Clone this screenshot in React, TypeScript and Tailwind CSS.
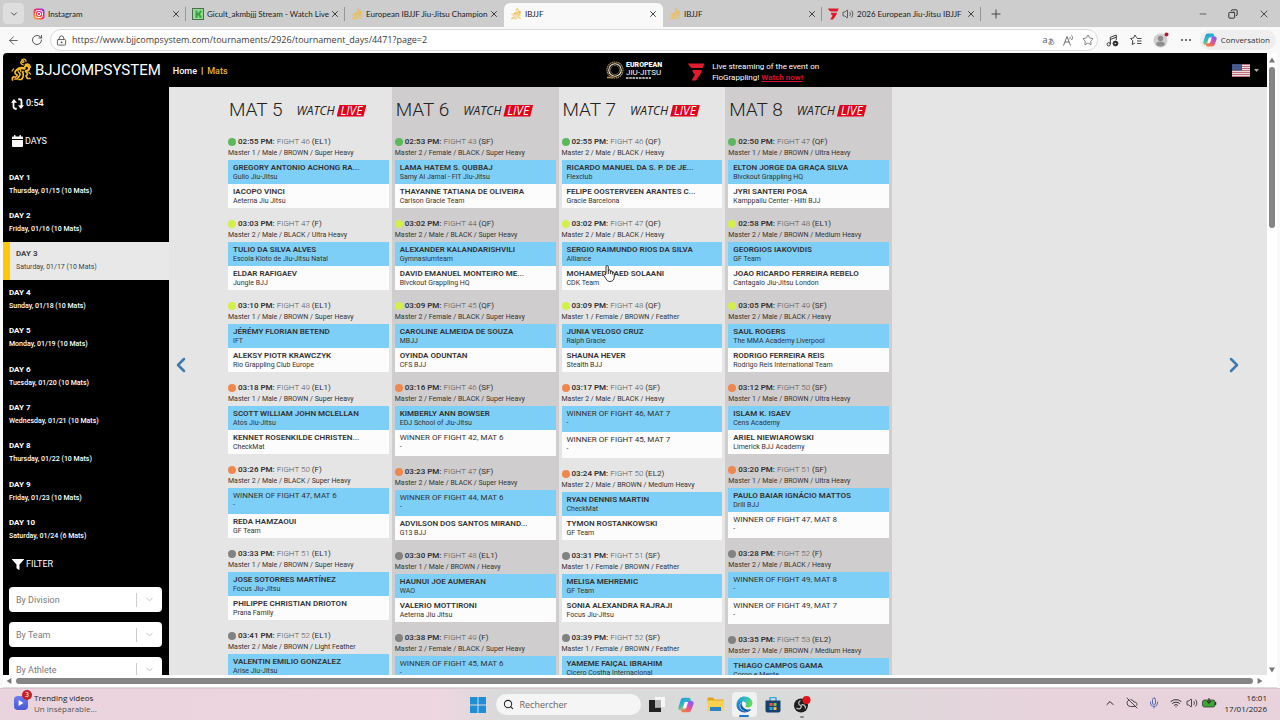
import React from "react";
import {
  ArrowLeft,
  ChevronDown,
  ChevronLeft,
  ChevronRight,
  ChevronUp,
  CloudOff,
  Copy,
  LockKeyhole,
  Mic,
  Minus,
  Plus,
  RotateCw,
  Search,
  Star,
  Volume2,
  Wifi,
  X,
} from "lucide-react";

type Side = { name: string; team: string; pending?: boolean };
type Fight = {
  status: "green" | "lime" | "orange" | "gray";
  time: string;
  fight: string;
  phase: string;
  division: string;
  sides: Side[];
};

const p = (name: string, team: string): Side => ({ name, team });
const w = (fight: number, mat: number): Side => ({
  name: `WINNER OF FIGHT ${fight}, MAT ${mat}`,
  team: "-",
  pending: true,
});
const f = (
  status: Fight["status"],
  time: string,
  fight: string,
  phase: string,
  division: string,
  a: Side,
  b: Side,
): Fight => ({ status, time, fight, phase, division, sides: [a, b] });

const mats: { name: string; fights: Fight[] }[] = [
  {
    name: "MAT 5",
    fights: [
      f("green", "02:55 PM:", "FIGHT 46", "(EL1)", "Master 1 / Male / BROWN / Super Heavy", p("GREGORY ANTONIO ACHONG RA...", "Gullo Jiu-Jitsu"), p("IACOPO VINCI", "Aeterna Jiu Jitsu")),
      f("lime", "03:03 PM:", "FIGHT 47", "(F)", "Master 2 / Male / BLACK / Ultra Heavy", p("TULIO DA SILVA ALVES", "Escola Kioto de Jiu-Jitsu Natal"), p("ELDAR RAFIGAEV", "Jungle BJJ")),
      f("lime", "03:10 PM:", "FIGHT 48", "(EL1)", "Master 1 / Male / BROWN / Super Heavy", p("JÉRÉMY FLORIAN BETEND", "IFT"), p("ALEKSY PIOTR KRAWCZYK", "Rio Grappling Club Europe")),
      f("orange", "03:18 PM:", "FIGHT 49", "(EL1)", "Master 1 / Male / BROWN / Super Heavy", p("SCOTT WILLIAM JOHN MCLELLAN", "Atos Jiu-Jitsu"), p("KENNET ROSENKILDE CHRISTEN...", "CheckMat")),
      f("orange", "03:26 PM:", "FIGHT 50", "(F)", "Master 2 / Male / BLACK / Super Heavy", w(47, 6), p("REDA HAMZAOUI", "GF Team")),
      f("gray", "03:33 PM:", "FIGHT 51", "(EL1)", "Master 1 / Male / BROWN / Super Heavy", p("JOSE SOTORRES MARTÍNEZ", "Focus Jiu-Jitsu"), p("PHILIPPE CHRISTIAN DRIOTON", "Prana Family")),
      f("gray", "03:41 PM:", "FIGHT 52", "(EL1)", "Master 2 / Male / BROWN / Light Feather", p("VALENTIN EMILIO GONZALEZ", "Arise Jiu-Jitsu"), w(50, 5)),
    ],
  },
  {
    name: "MAT 6",
    fights: [
      f("green", "02:53 PM:", "FIGHT 43", "(SF)", "Master 2 / Female / BLACK / Super Heavy", p("LAMA HATEM S. QUBBAJ", "Samy Al Jamal - FIT Jiu-Jitsu"), p("THAYANNE TATIANA DE OLIVEIRA", "Carlson Gracie Team")),
      f("lime", "03:02 PM:", "FIGHT 44", "(QF)", "Master 2 / Male / BLACK / Super Heavy", p("ALEXANDER KALANDARISHVILI", "Gymnasiumteam"), p("DAVID EMANUEL MONTEIRO ME...", "Blvckout Grappling HQ")),
      f("lime", "03:09 PM:", "FIGHT 45", "(QF)", "Master 2 / Female / BLACK / Super Heavy", p("CAROLINE ALMEIDA DE SOUZA", "MBJJ"), p("OYINDA ODUNTAN", "CFS BJJ")),
      f("orange", "03:16 PM:", "FIGHT 46", "(SF)", "Master 2 / Female / BLACK / Super Heavy", p("KIMBERLY ANN BOWSER", "EDJ School of Jiu-Jitsu"), w(42, 6)),
      f("orange", "03:23 PM:", "FIGHT 47", "(SF)", "Master 2 / Male / BLACK / Super Heavy", w(44, 6), p("ADVILSON DOS SANTOS MIRAND...", "G13 BJJ")),
      f("gray", "03:30 PM:", "FIGHT 48", "(EL1)", "Master 1 / Male / BROWN / Heavy", p("HAUNUI JOE AUMERAN", "WAO"), p("VALERIO MOTTIRONI", "Aeterna Jiu Jitsu")),
      f("gray", "03:38 PM:", "FIGHT 49", "(F)", "Master 2 / Female / BLACK / Super Heavy", w(45, 6), w(46, 6)),
    ],
  },
  {
    name: "MAT 7",
    fights: [
      f("green", "02:55 PM:", "FIGHT 46", "(QF)", "Master 2 / Male / BLACK / Heavy", p("RICARDO MANUEL DA S. P. DE JE...", "Flexclub"), p("FELIPE OOSTERVEEN ARANTES C...", "Gracie Barcelona")),
      f("lime", "03:02 PM:", "FIGHT 47", "(QF)", "Master 2 / Male / BLACK / Heavy", p("SERGIO RAIMUNDO RIOS DA SILVA", "Alliance"), p("MOHAMED SAED SOLAANI", "CDK Team")),
      f("lime", "03:09 PM:", "FIGHT 48", "(QF)", "Master 1 / Female / BROWN / Feather", p("JUNIA VELOSO CRUZ", "Ralph Gracie"), p("SHAUNA HEVER", "Stealth BJJ")),
      f("orange", "03:17 PM:", "FIGHT 49", "(SF)", "Master 2 / Male / BLACK / Heavy", w(46, 7), w(45, 7)),
      f("orange", "03:24 PM:", "FIGHT 50", "(EL2)", "Master 2 / Male / BROWN / Medium Heavy", p("RYAN DENNIS MARTIN", "CheckMat"), p("TYMON ROSTANKOWSKI", "GF Team")),
      f("gray", "03:31 PM:", "FIGHT 51", "(SF)", "Master 1 / Female / BROWN / Feather", p("MELISA MEHREMIC", "GF Team"), p("SONIA ALEXANDRA RAJRAJI", "Focus Jiu-Jitsu")),
      f("gray", "03:39 PM:", "FIGHT 52", "(SF)", "Master 1 / Female / BROWN / Feather", p("YAMEME FAIÇAL IBRAHIM", "Cicero Costha Internacional"), w(48, 7)),
    ],
  },
  {
    name: "MAT 8",
    fights: [
      f("green", "02:50 PM:", "FIGHT 47", "(QF)", "Master 1 / Male / BROWN / Ultra Heavy", p("ELTON JORGE DA GRAÇA SILVA", "Blvckout Grappling HQ"), p("JYRI SANTERI POSA", "Kamppailu Center - Hilti BJJ")),
      f("lime", "02:58 PM:", "FIGHT 48", "(EL1)", "Master 2 / Male / BROWN / Medium Heavy", p("GEORGIOS IAKOVIDIS", "GF Team"), p("JOAO RICARDO FERREIRA REBELO", "Cantagalo Jiu-Jitsu London")),
      f("lime", "03:05 PM:", "FIGHT 49", "(SF)", "Master 2 / Male / BLACK / Heavy", p("SAUL ROGERS", "The MMA Academy Liverpool"), p("RODRIGO FERREIRA REIS", "Rodrigo Reis International Team")),
      f("orange", "03:12 PM:", "FIGHT 50", "(SF)", "Master 1 / Male / BROWN / Ultra Heavy", p("ISLAM K. ISAEV", "Cens Academy"), p("ARIEL NIEWIAROWSKI", "Limerick BJJ Academy")),
      f("orange", "03:20 PM:", "FIGHT 51", "(SF)", "Master 1 / Male / BROWN / Ultra Heavy", p("PAULO BAIAR IGNÁCIO MATTOS", "Drill BJJ"), w(47, 8)),
      f("gray", "03:28 PM:", "FIGHT 52", "(F)", "Master 2 / Male / BLACK / Heavy", w(49, 8), w(49, 7)),
      f("gray", "03:35 PM:", "FIGHT 53", "(EL2)", "Master 2 / Male / BROWN / Medium Heavy", p("THIAGO CAMPOS GAMA", "Corpo e Mente"), w(48, 8)),
    ],
  },
];

const days = [
  ["DAY 1", "Thursday, 01/15 (10 Mats)"],
  ["DAY 2", "Friday, 01/16 (10 Mats)"],
  ["DAY 3", "Saturday, 01/17 (10 Mats)"],
  ["DAY 4", "Sunday, 01/18 (10 Mats)"],
  ["DAY 5", "Monday, 01/19 (10 Mats)"],
  ["DAY 6", "Tuesday, 01/20 (10 Mats)"],
  ["DAY 7", "Wednesday, 01/21 (10 Mats)"],
  ["DAY 8", "Thursday, 01/22 (10 Mats)"],
  ["DAY 9", "Friday, 01/23 (10 Mats)"],
  ["DAY 10", "Saturday, 01/24 (6 Mats)"],
];

const dot = {
  green: "bg-[#5cb85c]",
  lime: "bg-[#d3f04a]",
  orange: "bg-[#f0874f]",
  gray: "bg-[#828282]",
};

/* ---------- drawings ---------- */

function Lion({ className }: { className: string }) {
  return (
    <svg viewBox="0 0 40 48" className={className} fill="none" stroke="currentColor" strokeLinecap="round" strokeLinejoin="round" aria-hidden="true">
      <path strokeWidth="2.4" d="M25 14c-4-1-7-4-5-7s6-2 6 0-3 3-4 1M22 3c4-2 9 0 8 4" />
      <path strokeWidth="5" d="M12 24c4-4 10-5 15-3" />
      <path strokeWidth="4.4" d="M28 17c4-3 8-1 8 3s-3 6-6 6" />
      <path strokeWidth="3" d="M37 15l2 3-3 3M29 13l4-1 4 2" />
      <path strokeWidth="3.4" d="M10 25c-4 3-2 7 1 8s0 6-4 5-5 3-4 6" />
      <path strokeWidth="3.4" d="M15 28c3 3 5 5 1 9l-4 5h-4" />
      <path strokeWidth="3.4" d="M29 27c5 3 5 6 1 9l3 5h5M24 27c-1 5 2 7 0 11l-3 5h-5" />
      <path strokeWidth="2.4" d="M5 22l-3 4M18 20l2 8M36 29l3 3" />
    </svg>
  );
}

function FloLogo({ className }: { className: string }) {
  return (
    <svg viewBox="0 0 34 36" className={className} fill="#e01b2c" aria-hidden="true">
      <path d="M0 1h33l-4 9H11C5 10 2 6 0 1z" />
      <path d="M9 14h19l-3 8-9 13H7l7-12C11 22 9 18 9 14z" />
    </svg>
  );
}

function InstagramLogo() {
  return (
    <svg viewBox="0 0 24 24" className="size-3 shrink-0" aria-hidden="true">
      <defs>
        <linearGradient id="ig" x1="0" y1="1" x2="1" y2="0">
          <stop offset="0" stopColor="#ffc33d" />
          <stop offset=".35" stopColor="#f9503a" />
          <stop offset=".65" stopColor="#e0218a" />
          <stop offset="1" stopColor="#7a3cf0" />
        </linearGradient>
      </defs>
      <rect x="1" y="1" width="22" height="22" rx="6" fill="url(#ig)" />
      <rect x="5" y="5" width="14" height="14" rx="4" fill="none" stroke="#fff" strokeWidth="2" />
      <circle cx="12" cy="12" r="3.4" fill="none" stroke="#fff" strokeWidth="2" />
      <circle cx="16.4" cy="7.6" r="1.1" fill="#fff" />
    </svg>
  );
}

function KickLogo() {
  return (
    <svg viewBox="0 0 24 24" className="size-3 shrink-0" aria-hidden="true">
      <rect x="1" y="1" width="22" height="22" fill="#8fe08f" stroke="#4d6b50" strokeWidth="2" />
      <path d="M7 5h4v5h2V8h2V5h4v5h-2v2h-1v1h1v2h2v5h-4v-3h-2v-2h-2v5H7z" fill="#3f9a4a" />
    </svg>
  );
}

function CopilotLogo({ id, className }: { id: string; className: string }) {
  return (
    <svg viewBox="0 0 24 24" className={className} aria-hidden="true">
      <defs>
        <linearGradient id={`${id}a`} x1="0" y1="0" x2=".6" y2="1">
          <stop offset="0" stopColor="#1b8fe8" />
          <stop offset=".5" stopColor="#2fb6c8" />
          <stop offset="1" stopColor="#f2c230" />
        </linearGradient>
        <linearGradient id={`${id}b`} x1=".6" y1="0" x2=".2" y2="1">
          <stop offset="0" stopColor="#8b5cf0" />
          <stop offset=".5" stopColor="#e0529c" />
          <stop offset="1" stopColor="#f7803c" />
        </linearGradient>
      </defs>
      <path d="M9 1h7c2 0 2.600 1.200 3 2.500L20 7h-4c-2 0-3 1-3.500 3l-2 7c-.6 2-1.500 3-3.500 3H4c-3 0-4-2-3.200-5L4 4.500C4.800 2.200 6.500 1 9 1z" fill={`url(#${id}a)`} />
      <path d="M15 23H8c-2 0-2.600-1.200-3-2.500L4.500 19H8c2 0 3-1 3.500-3l2-7c.6-2 1.500-3 3.500-3h3c3 0 4 2 3.200 5L20 19.500c-.8 2.300-2.500 3.500-5 3.500z" fill={`url(#${id}b)`} />
      <path d="M13 7.500h-1.500c-1 0-1.600.5-2 1.800L8 15.500c-.2.700-.4 1.100-.8 1.500H11c1 0 1.500-.6 1.900-1.900l1.700-6c.2-.8.400-1.200.9-1.600z" fill="#fff" />
    </svg>
  );
}

function RefreshIcon() {
  return (
    <svg viewBox="0 0 26 24" className="h-3 w-[13px]" fill="none" stroke="#fff" strokeWidth="3.600" aria-hidden="true">
      <path d="M11.500 21.500H9a4 4 0 0 1-4-4V8" />
      <path d="M14.500 2.500H17a4 4 0 0 1 4 4V16" />
      <path d="M0 9.500L6 2l6 7.500zM26 14.500L20 22l-6-7.500z" fill="#fff" stroke="none" />
    </svg>
  );
}

function CalendarIcon() {
  return (
    <svg viewBox="0 0 22 24" className="h-3 w-[11px]" fill="#fff" aria-hidden="true">
      <path d="M0 10h22v12a2 2 0 0 1-2 2H2a2 2 0 0 1-2-2zM0 8V5a2 2 0 0 1 2-2h2V1a1 1 0 0 1 1-1h1a1 1 0 0 1 1 1v2h8V1a1 1 0 0 1 1-1h1a1 1 0 0 1 1 1v2h2a2 2 0 0 1 2 2v3z" />
    </svg>
  );
}

function FunnelIcon() {
  return (
    <svg viewBox="0 0 24 22" className="h-[11px] w-3" fill="#fff" aria-hidden="true">
      <path d="M1 0h22c1 0 1.300 1 .7 1.700L15 11v10c0 1-1 1.200-1.700.7L9.600 19c-.4-.3-.6-.7-.6-1.200V11L.3 1.700C-.3 1 0 0 1 0z" />
    </svg>
  );
}

function ChampionshipSeal() {
  return (
    <svg viewBox="0 0 36 36" className="size-[18px]" fill="none" aria-hidden="true">
      <circle cx="18" cy="18" r="16" stroke="#a98c55" strokeWidth="2.400" strokeDasharray="3 1" />
      <circle cx="18" cy="18" r="12.500" stroke="#f4ead2" strokeWidth="2.200" />
      <circle cx="18" cy="18" r="9" stroke="#c9b27c" strokeWidth="1.600" strokeDasharray="2 1" />
      <path d="M2 33h13" stroke="#a98c55" strokeWidth="3.500" />
    </svg>
  );
}

function UsFlag() {
  return (
    <svg viewBox="0 0 36 26" className="h-[13px] w-[18px]" aria-hidden="true">
      <rect width="36" height="26" fill="#ecd9dc" />
      <path d="M0 1h36M0 5h36M0 9h36M0 13h36M0 17h36M0 21h36M0 25h36" stroke="#b9707f" strokeWidth="2" />
      <rect width="20" height="13" fill="#3f5484" />
      <path d="M2 3h16M2 6.500h16M2 10h16" stroke="#8d9bbd" strokeWidth="1" strokeDasharray="1 2" />
    </svg>
  );
}

function HandCursor() {
  return (
    <svg viewBox="0 0 24 34" className="h-[17px] w-3" fill="#fff" stroke="#222" strokeWidth="1.800" strokeLinejoin="round" aria-hidden="true">
      <path d="M6 18V3.500a2.300 2.300 0 0 1 4.600 0V13l.2-1.500a2 2 0 0 1 4 .5v2a2 2 0 0 1 4 .3V16a1.900 1.900 0 0 1 3.700.4V24c0 5-3 9-8.500 9-4 0-6-2-8-5.500L1.500 21c-.8-2 1.800-3.500 3.300-1.500z" />
      <path d="M10.600 13v5M14.800 14v4M18.800 16v3" />
    </svg>
  );
}

function EdgeLogo() {
  return (
    <svg viewBox="0 0 32 32" className="size-[17px]" aria-hidden="true">
      <defs>
        <linearGradient id="ed1" x1="0" y1="0" x2="1" y2=".4">
          <stop offset="0" stopColor="#1c8fdc" />
          <stop offset=".6" stopColor="#2fc3c0" />
          <stop offset="1" stopColor="#67d94f" />
        </linearGradient>
        <linearGradient id="ed2" x1="0" y1="0" x2="1" y2="1">
          <stop offset="0" stopColor="#1f9ae0" />
          <stop offset="1" stopColor="#0b4d9c" />
        </linearGradient>
      </defs>
      <path d="M1 15C2 6 9 1 16 1c9 0 15 6 15 12.500 0 5-4 8-8.500 8-4 0-5.500-1.500-4.500-2.500 3-3.500 0-8.500-5-8.500-6 0-10 2-12 4.500z" fill="url(#ed1)" />
      <path d="M1 15c1-4 6-6.500 11-5-4 2-6 6-5 10.500 1.500 6 8 9.500 14 7.500l6-3c1-.4 1.600.3 1 1-3 3.500-7 5-12 5C7 31 0 24 1 15z" fill="url(#ed2)" />
      <path d="M12 10c-2.500 3-1.500 9 3 12.500 3.500 2.500 8 3.500 12 2.500-4 4-11 5-15.500 1C6.500 21.500 7 13 12 10z" fill="#0d5fae" />
    </svg>
  );
}

/* ---------- browser chrome ---------- */

const lionFav = <Lion className="h-3 w-3 shrink-0 text-[#f0b93c]" />;
const tabs: { icon: React.ReactNode; label: string; active?: boolean; divider?: boolean; sound?: boolean }[] = [
  { icon: <InstagramLogo />, label: "Instagram", divider: true },
  { icon: <KickLogo />, label: "Gicult_akmbjjj Stream - Watch Live", divider: true },
  { icon: lionFav, label: "European IBJJF Jiu-Jitsu Champion" },
  { icon: lionFav, label: "IBJJF", active: true },
  { icon: lionFav, label: "IBJJF", divider: true },
  { icon: <FloLogo className="h-3 w-[11px] shrink-0" />, label: "2026 European Jiu-Jitsu IBJJF", divider: true, sound: true },
];

function TabStrip() {
  return (
    <div className="flex h-[27px] shrink-0 items-stretch bg-[#cdcdcd] pl-[3px]">
      <button aria-label="Tab actions" className="my-[3px] flex w-[21px] items-center justify-center rounded bg-[#dedede] text-[#333]">
        <ChevronDown className="size-2.5" />
      </button>
      <div className="ml-[3px] flex min-w-0">
        {tabs.map((t, i) => (
          <div key={i} className={`mt-[3px] flex w-[159px] min-w-0 items-center pb-0.5 pl-1.5 ${t.active ? "rounded-t-md bg-[#f9f9f9]" : ""}`}>
            {t.icon}
            {t.sound && <Volume2 className="ml-[3px] size-3 shrink-0 text-[#333]" strokeWidth={1.5} />}
            <button className="ml-[3px] min-w-0 flex-1 text-left font-[Lato,sans-serif] text-[8px] leading-3 whitespace-nowrap text-[#222]">
              {t.label}
            </button>
            <button aria-label={`Close ${t.label}`} className="text-[#222]">
              <X className="size-2.5" />
            </button>
            <span className={`ml-1 h-3.5 w-px ${t.divider ? "bg-[#969696]" : ""}`} />
          </div>
        ))}
      </div>
      <button aria-label="New tab" className="ml-2 text-[#333]">
        <Plus className="size-3.5" strokeWidth={1.5} />
      </button>
      <div className="ml-auto flex items-center gap-5 pr-2.5 text-[#222]">
        <button aria-label="Minimize"><Minus className="size-2.5" strokeWidth={1.5} /></button>
        <button aria-label="Restore"><Copy className="size-2.5 -scale-x-100" strokeWidth={2.2} /></button>
        <button aria-label="Close window"><X className="size-3" strokeWidth={1.5} /></button>
      </div>
    </div>
  );
}

function Toolbar() {
  return (
    <div className="flex h-[26px] shrink-0 items-center bg-[#f9f9f9] pr-1 pl-[7px] text-[#444]">
      <button aria-label="Back"><ArrowLeft className="size-[13px]" strokeWidth={1.5} /></button>
      <button aria-label="Reload" className="ml-[11px]"><RotateCw className="size-3" strokeWidth={1.8} /></button>
      <div className="ml-[7px] flex h-[22px] min-w-0 flex-1 items-center rounded-full border border-[#d9d9d9] bg-white pr-[3px] pl-[5px]">
        <LockKeyhole className="size-[11px] shrink-0" strokeWidth={1.8} />
        <input
          aria-label="Address"
          defaultValue="https://www.bjjcompsystem.com/tournaments/2926/tournament_days/4471?page=2"
          className="ml-[5px] min-w-0 flex-1 bg-transparent text-[9px] leading-4 text-[#3c3c3c] outline-none"
        />
        <button aria-label="Translate" className="flex items-end text-[9px] leading-3 text-[#555]">
          <span>a</span>
          <span className="text-[7px] leading-[9px] font-['Noto_Sans_CJK_JP',sans-serif]">あ</span>
        </button>
        <button aria-label="Read aloud" className="ml-2 text-[#555]">
          <svg viewBox="0 0 22 22" className="size-[11px]" fill="none" stroke="currentColor" strokeWidth="1.700" aria-hidden="true">
            <path d="M1 21L8 3l7 18M4 14h8M13 4c1.500 1 1.500 3 .5 4.500M17 1c2.500 2.500 2.500 6 0 9" />
          </svg>
        </button>
        <button aria-label="Add to favorites" className="ml-2 text-[#555]"><Star className="size-3" strokeWidth={1.5} /></button>
      </div>
      <div className="ml-2 flex items-center gap-[11px]">
        <button aria-label="Media">
          <svg viewBox="0 0 24 24" className="size-[13px]" fill="none" stroke="#333" strokeWidth="1.800" aria-hidden="true">
            <circle cx="5" cy="19" r="3" />
            <path d="M8 19V6l11-4v9M8 10l11-4" />
            <circle cx="17.500" cy="17.500" r="4.500" fill="#222" />
            <path d="M16 15.500l3.500 2-3.500 2z" fill="#fff" stroke="none" />
          </svg>
        </button>
        <button aria-label="Favorites">
          <svg viewBox="0 0 24 24" className="size-3" fill="none" stroke="#333" strokeWidth="1.800" strokeLinejoin="round" aria-hidden="true">
            <path d="M14 8l-1-1-3-5-3 6-6 1 4.500 4.500L4.500 21l5.500-3M14 9h9M14 14h9M14 19h9" />
          </svg>
        </button>
        <button aria-label="Profile">
          <svg viewBox="0 0 32 32" className="size-4" aria-hidden="true">
            <circle cx="15" cy="17" r="14" fill="#cfcfcf" />
            <circle cx="15" cy="13" r="5.500" fill="#8d8d8d" />
            <path d="M6 25c0-8 18-8 18 0-4 5-14 5-18 0z" fill="#8d8d8d" />
            <circle cx="27" cy="5" r="4" fill="#c1122f" />
          </svg>
        </button>
        <button aria-label="Settings and more" className="flex w-3 justify-center gap-0.5">
          <span className="size-[2px] rounded-full bg-[#444]" />
          <span className="size-[2px] rounded-full bg-[#444]" />
          <span className="size-[2px] rounded-full bg-[#444]" />
        </button>
      </div>
      <button className="ml-2 flex h-5 items-center gap-1 rounded-full bg-[#eeeeee] pr-1.5 pl-[3px] text-[8px] text-[#333]">
        <CopilotLogo id="cv" className="size-3.5" />
        Conversation
      </button>
    </div>
  );
}

/* ---------- page ---------- */

function SiteHeader() {
  return (
    <header className="flex h-[34px] shrink-0 items-center rounded-tl bg-black text-white">
      <div className="flex w-[603px] items-center">
        <a href="#home" className="flex items-center gap-1 pl-2">
          <Lion className="h-6 w-5 text-[#f5b92a]" />
          <span className="text-[15px] leading-8">BJJCOMPSYSTEM</span>
        </a>
        <nav className="ml-3 flex gap-1 pt-0.5 text-[9px] leading-3 font-medium">
          <a href="#home">Home</a>
          <span>|</span>
          <a href="#mats" className="text-[#e9b52f]">Mats</a>
        </nav>
      </div>
      <a href="#event" className="flex items-center gap-0.5" aria-label="European Jiu-Jitsu">
        <ChampionshipSeal />
        <span className="flex flex-col items-start">
          <span className="text-[7px] leading-[7px] font-black">EUROPEAN</span>
          <span className="text-[8px] leading-[8px]">JIU-JITSU</span>
          <svg viewBox="0 0 50 4" className="h-[2px] w-[25px]" aria-hidden="true">
            <path d="M0 2h50" stroke="#ddd" strokeWidth="3" strokeDasharray="5 1.500" />
          </svg>
        </span>
      </a>
      <div className="ml-[26px] flex items-center gap-[7px] pt-[3px]">
        <FloLogo className="h-[18px] w-[17px]" />
        <p className="text-[8px] leading-[11px]">
          Live streaming of the event on
          <br />
          FloGrappling! <a href="#live" className="font-bold text-[#d3122b] underline">Watch now!</a>
        </p>
      </div>
      <button aria-label="Language" className="mr-2 ml-auto flex items-center gap-1">
        <UsFlag />
        <svg viewBox="0 0 10 6" className="h-[3px] w-[5px]" fill="#aaa" aria-hidden="true"><path d="M0 0h10L5 6z" /></svg>
      </button>
    </header>
  );
}

function FilterSelect({ label }: { label: string }) {
  return (
    <div className="flex h-[25px] items-center rounded-sm bg-white text-[#7b7b7b]">
      <select aria-label={label} className="min-w-0 flex-1 appearance-none bg-transparent pl-[7px] text-[9px] leading-4">
        <option>{label}</option>
      </select>
      <span className="h-3.5 w-px bg-[#ccc]" />
      <ChevronDown className="mx-[7px] size-[11px] text-[#bbb]" />
    </div>
  );
}

function Sidebar() {
  return (
    <aside className="w-[166px] shrink-0 bg-black text-white">
      <div className="flex h-[33px] items-center gap-0.5 pl-2 text-[9px] font-medium">
        <RefreshIcon />
        0:54
      </div>
      <h2 className="mt-2.5 flex h-[22px] items-center gap-0.5 pl-[9px] text-[9px] leading-3">
        <CalendarIcon />
        DAYS
      </h2>
      <ul className="mt-[13px] grid min-h-96 auto-rows-fr">
        {days.map(([name, detail]) => {
          const active = name === "DAY 3";
          return (
            <li key={name} className="grid">
              <a
                href="#day"
                className={`flex flex-col justify-center gap-px ${active ? "border-l-[7px] border-[#fcc80a] bg-[#e8e8e8] pl-1.5 text-[#444]" : "pl-1.5"}`}
              >
                <span className="text-[8px] leading-3 font-bold">{name}</span>
                <span className={`text-[7px] leading-3 ${active ? "" : "font-medium"}`}>{detail}</span>
              </a>
            </li>
          );
        })}
      </ul>
      <h2 className="flex h-[30px] items-center gap-0.5 pl-[9px] text-[9px] leading-3">
        <FunnelIcon />
        FILTER
      </h2>
      <div className="mt-2 flex flex-col gap-2.5 pr-[7px] pb-4 pl-1.5">
        <FilterSelect label="By Division" />
        <FilterSelect label="By Team" />
        <FilterSelect label="By Athlete" />
      </div>
    </aside>
  );
}

function FightCard({ fight }: { fight: Fight }) {
  return (
    <li className="mb-2.5">
      <div className="flex h-3 items-center gap-px text-[8px] whitespace-nowrap">
        <span className={`size-2 shrink-0 rounded-full ${dot[fight.status]}`} />
        <p className="pl-px text-[#333]">
          <span className="font-semibold">{fight.time}</span> <span className="font-light text-[#555]">{fight.fight}</span> {fight.phase}
        </p>
      </div>
      <p className="h-3 text-[7px] leading-[10px] whitespace-nowrap text-[#333]">{fight.division}</p>
      {fight.sides.map((s, i) => (
        <div
          key={i}
          className={`flex flex-col pt-[3px] pl-[5px] whitespace-nowrap text-[#333] ${s.pending ? "h-[26px]" : "h-6"} ${i === 0 ? "bg-[#7ecff7]" : "bg-[#fcfcfc]"}`}
        >
          <span className={`text-[8px] leading-[10px] ${s.pending ? "" : "font-semibold"}`}>{s.name}</span>
          <span className="text-[7px] leading-[9px]">{s.team}</span>
        </div>
      ))}
    </li>
  );
}

function MatColumn({ name, fights, shaded }: { name: string; fights: Fight[]; shaded: boolean }) {
  return (
    <section className={`px-[3px] ${shaded ? "bg-[#cfcdce]" : ""}`}>
      <div className="flex h-[49px] items-center gap-3.5 pb-1 pl-px">
        <h2 className="text-[19px] leading-6 font-light text-[#222]">{name}</h2>
        <a href="#watch" className="flex items-center gap-0.5 pt-0.5 font-['Open_Sans',sans-serif] text-[12px] leading-3 italic text-[#222]" aria-label={`Watch ${name} live`}>
          <span>WATCH</span>
          <span className="flex h-3 items-center bg-[#e2001a] px-1 text-white [clip-path:polygon(3px_0,100%_0,calc(100%-3px)_100%,0_100%)]">LIVE</span>
        </a>
      </div>
      <ul>
        {fights.map((x, i) => (
          <FightCard key={i} fight={x} />
        ))}
      </ul>
    </section>
  );
}

function Page() {
  return (
    <div className="flex min-h-0 min-w-0 flex-1 flex-col overflow-hidden font-[Roboto,sans-serif]">
      <SiteHeader />
      <div className="flex min-h-0 flex-1 overflow-hidden bg-[#e5e5e5]">
        <Sidebar />
        <main className="flex min-w-0 flex-1 items-start">
          <button aria-label="Previous mats" className="mt-[266px] w-14 shrink-0 text-[#3d7ab0]">
            <ChevronLeft className="size-6" strokeWidth={2.5} />
          </button>
          <div className="relative grid w-[667px] shrink-0 grid-cols-4">
            {mats.map((m, i) => (
              <MatColumn key={m.name} {...m} shaded={i % 2 === 1} />
            ))}
            <div className="absolute top-[178px] left-[378px]"><HandCursor /></div>
          </div>
          <button aria-label="Next mats" className="mt-[266px] mr-[21px] ml-auto text-[#3d7ab0]">
            <ChevronRight className="size-6" strokeWidth={2.5} />
          </button>
        </main>
      </div>
    </div>
  );
}

function Arrow({ d }: { d: string }) {
  return (
    <svg viewBox="0 0 10 10" className="size-1.5 shrink-0" fill="#777" aria-hidden="true">
      <path d={d} />
    </svg>
  );
}

/* ---------- taskbar ---------- */

function Taskbar() {
  const slot = "flex h-7 w-[29px] items-center justify-center";
  return (
    <footer className="grid h-8 shrink-0 grid-cols-[1fr_auto_1fr] items-center border-t border-[#d9c6ce] bg-[linear-gradient(to_right,#e9d3dc_0%,#eed6e1_34%,#dadada_39%,#dadada_62%,#e8d3dc_82%,#e8d3dc_100%)] text-[#222]">
      <button className="flex items-center gap-1.5 pb-1 pl-3.5 text-left text-[8px] leading-[11px]">
        <span className="relative flex size-3.5 items-center justify-center rounded-sm bg-gradient-to-b from-[#6f7df0] to-[#4856d8]">
          <svg viewBox="0 0 10 10" className="size-1.5" fill="#fff" aria-hidden="true"><path d="M1 0l8 5-8 5z" /></svg>
          <span className="absolute -top-1.5 -right-1 flex size-[10px] items-center justify-center rounded-full bg-[#c3202c] text-[7px] text-white">3</span>
        </span>
        <span>
          Trending videos
          <br />
          <span className="text-[#555]">Un inséparable...</span>
        </span>
      </button>
      <div className="flex items-center">
        <button aria-label="Start" className={slot}>
          <svg viewBox="0 0 32 32" className="size-4" fill="#1c8fd6" aria-hidden="true">
            <path d="M0 0h15v15H0zM17 0h15v15H17zM0 17h15v15H0zM17 17h15v15H17z" />
          </svg>
        </button>
        <label className="mr-0.5 ml-[3px] flex h-[21px] w-[145px] items-center gap-1.5 rounded-full bg-[#f5f5f5] px-[7px]">
          <Search className="size-[11px] shrink-0" strokeWidth={2.2} />
          <input aria-label="Search" placeholder="Rechercher" className="min-w-0 flex-1 bg-transparent text-[9px] leading-4 outline-none placeholder:text-[#666]" />
        </label>
        <button aria-label="Task view" className={slot}>
          <svg viewBox="0 0 32 30" className="h-[15px] w-4" aria-hidden="true">
            <rect x="12" y="0" width="20" height="20" fill="#f6f6f6" />
            <path d="M0 6h12v15h12v9H0z" fill="#222" />
            <path d="M12 6h12v15H12z" fill="#b5b5b5" />
          </svg>
        </button>
        <button aria-label="Copilot" className={slot}><CopilotLogo id="tb" className="size-4" /></button>
        <button aria-label="File Explorer" className={slot}>
          <svg viewBox="0 0 34 30" className="h-[15px] w-[17px]" aria-hidden="true">
            <path d="M1 3a2 2 0 0 1 2-2h9l3 4h16a2 2 0 0 1 2 2v6H1z" fill="#e3a21a" />
            <rect x="1" y="7" width="32" height="21" rx="2" fill="#fbd152" />
            <path d="M6 20h22v8H6z" fill="#2f83c5" />
          </svg>
        </button>
        <button aria-label="Microsoft Edge" className="relative mx-0.5 flex h-[25px] w-[25px] items-center justify-center rounded-sm bg-[#f1f1f1]">
          <EdgeLogo />
          <span className="absolute bottom-0 h-[2px] w-2.5 rounded-full bg-[#1f77c8]" />
        </button>
        <button aria-label="Store" className={slot}>
          <svg viewBox="0 0 32 32" className="size-4" aria-hidden="true">
            <path d="M10 8V3a2 2 0 0 1 2-2h8a2 2 0 0 1 2 2v5" fill="none" stroke="#35a6dd" strokeWidth="3" />
            <path d="M1 7h30v20a4 4 0 0 1-4 4H5a4 4 0 0 1-4-4z" fill="#17406d" />
            <path d="M9 12h6v6H9z" fill="#ef5530" /><path d="M17 12h6v6h-6z" fill="#7fc241" />
            <path d="M9 20h6v6H9z" fill="#2ba4e8" /><path d="M17 20h6v6h-6z" fill="#fbbd25" />
          </svg>
        </button>
        <button aria-label="OBS Studio" className={`${slot} relative`}>
          <svg viewBox="0 0 36 36" className="size-[18px]" aria-hidden="true">
            <circle cx="16" cy="19" r="14" fill="#1e1e1e" />
            <g fill="none" stroke="#bdbdbd" strokeWidth="2.500">
              <path d="M16 19c-6-1-6-8-1-10" />
              <path d="M16 19c4-4 10 0 9 6" />
              <path d="M16 19c2 6-5 9-9 5" />
            </g>
            <circle cx="27" cy="8" r="8" fill="#e4121c" />
          </svg>
          <span className="absolute bottom-px h-[2px] w-1 rounded-full bg-[#888]" />
        </button>
      </div>
      <div className="flex items-center justify-end pr-[13px] pb-1">
        <button aria-label="Hidden icons" className="mr-2.5"><ChevronUp className="size-3" /></button>
        <CloudOff className="mr-2.5 size-3" strokeWidth={1.6} />
        <Mic className="mr-2.5 size-3 text-[#4a63b8]" strokeWidth={1.8} />
        <Wifi className="mr-1 size-3" strokeWidth={1.8} />
        <Volume2 className="mr-1 size-3" strokeWidth={1.6} />
        <svg viewBox="0 0 30 20" className="mr-2 h-2.5 w-[15px]" aria-hidden="true">
          <rect x="1" y="4" width="25" height="14" rx="4" fill="#3fa535" stroke="#333" strokeWidth="1.500" />
          <path d="M27 8v6" stroke="#333" strokeWidth="3" />
          <path d="M14 0v9m-4-3l4 5 4-5" stroke="#222" strokeWidth="2" fill="none" />
        </svg>
        <time className="text-right text-[8px] leading-[11px]">
          16:01
          <br />
          17/01/2026
        </time>
      </div>
    </footer>
  );
}

export default function App() {
  return (
    <div className="flex h-screen flex-col overflow-hidden bg-[#f9f9f9] font-['Open_Sans',sans-serif]">
      <TabStrip />
      <Toolbar />
      <div className="mr-[3px] ml-[3px] flex min-h-0 flex-1 flex-col border-b border-[#ddd] bg-white">
        <div className="flex min-h-0 flex-1">
          <Page />
          <div className="flex w-2.5 shrink-0 flex-col items-center gap-1 pt-1 pb-0.5">
            <Arrow d="M5 1l5 8H0z" />
            <div className="min-h-0 w-1.5 flex-1">
              <div className="h-[27%] rounded-full bg-[#858585]" />
            </div>
            <Arrow d="M5 9l5-8H0z" />
          </div>
        </div>
        <div className="flex h-3 shrink-0 items-center gap-1 pr-3.5 pb-px pl-[3px]">
          <Arrow d="M1 5l8-5v10z" />
          <div className="h-1.5 flex-1 rounded-full bg-[#858585]" />
          <Arrow d="M9 5L1 0v10z" />
        </div>
      </div>
      <Taskbar />
    </div>
  );
}
